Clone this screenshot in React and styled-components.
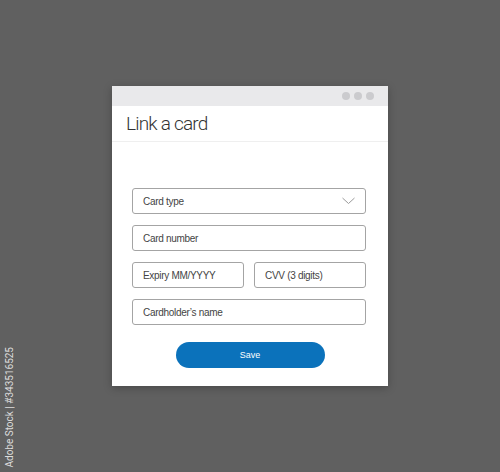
import React from "react";
import styled, { createGlobalStyle } from "styled-components";

const Global = createGlobalStyle`
  html, body {
    margin: 0;
    padding: 0;
    background: #606060;
    font-family: "Liberation Sans", Arial, sans-serif;
  }
`;

const Page = styled.div`
  position: relative;
  width: 500px;
  height: 472px;
  display: flex;
  align-items: center;
  justify-content: center;
  overflow: hidden;
`;

const SideMark = styled.div`
  position: absolute;
  left: 4px;
  bottom: 4px;
  writing-mode: vertical-rl;
  transform: rotate(180deg);
  font-family: Roboto, "Liberation Sans", sans-serif;
  font-size: 10px;
  color: #dcdcdc;
`;

const Window = styled.div`
  width: 276px;
  height: 300px;
  background: #ffffff;
  box-shadow: 0 2px 8px rgba(0, 0, 0, 0.25);
  display: flex;
  flex-direction: column;
`;

const TitleBar = styled.div`
  height: 20px;
  flex-shrink: 0;
  background: #e9e9eb;
  display: flex;
  align-items: center;
  justify-content: flex-end;
  gap: 4px;
  padding-right: 14px;
`;

const Dot = styled.span`
  width: 8px;
  height: 8px;
  border-radius: 50%;
  background: #cbcbce;
`;

const Header = styled.div`
  height: 35px;
  flex-shrink: 0;
  border-bottom: 1px solid #efefef;
  display: flex;
  align-items: center;
  padding-left: 14px;
  font-family: Roboto, "Liberation Sans", sans-serif;
  font-size: 19px;
  font-weight: 300;
  color: #333;
  letter-spacing: -0.8px;
`;

const Form = styled.div`
  padding: 46px 22px 0 20px;
  display: flex;
  flex-direction: column;
  gap: 11px;
`;

const Row = styled.div`
  display: flex;
  gap: 10px;
`;

const Field = styled.div`
  flex: ${(p) => (p.$grow ? "1 1 0" : "0 0 auto")};
  height: 26px;
  box-sizing: border-box;
  border: 1px solid #a4a4a4;
  border-radius: 3px;
  display: flex;
  align-items: center;
  justify-content: space-between;
  padding: 0 10px;
  font-size: 10px;
  letter-spacing: -0.3px;
  color: #444;
`;

const ButtonWrap = styled.div`
  display: flex;
  justify-content: center;
  padding-top: 6px;
  padding-left: 2px;
`;

const SaveButton = styled.button`
  width: 149px;
  height: 26px;
  border: none;
  border-radius: 13px;
  background: #0b72bb;
  color: #fff;
  font-family: inherit;
  font-size: 9px;
`;

const Chevron = () => (
  <svg width="13" height="8" viewBox="0 0 13 8">
    <path d="M0.5 1 L6.5 6.5 L12.5 1" fill="none" stroke="#9a9a9a" strokeWidth="1" />
  </svg>
);

export default function App() {
  return (
    <>
      <Global />
      <Page>
        <SideMark>Adobe Stock | #343516525</SideMark>
        <Window>
          <TitleBar>
            <Dot />
            <Dot />
            <Dot />
          </TitleBar>
          <Header>Link a card</Header>
          <Form>
            <Field>
              Card type
              <Chevron />
            </Field>
            <Field>Card number</Field>
            <Row>
              <Field $grow>Expiry MM/YYYY</Field>
              <Field $grow>CVV (3 digits)</Field>
            </Row>
            <Field>Cardholder’s name</Field>
            <ButtonWrap>
              <SaveButton>Save</SaveButton>
            </ButtonWrap>
          </Form>
        </Window>
      </Page>
    </>
  );
}
